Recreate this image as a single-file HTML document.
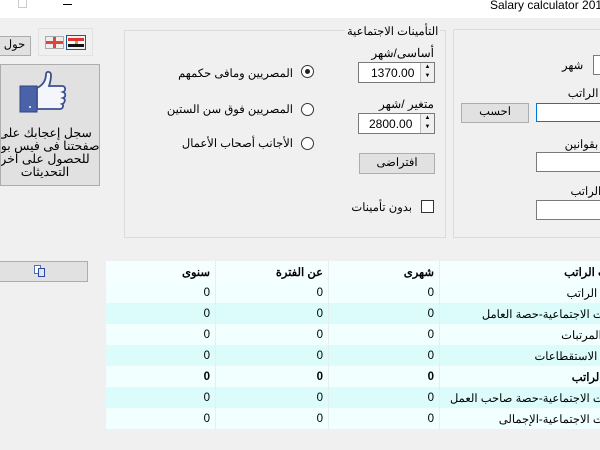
<!DOCTYPE html>
<html><head><meta charset="utf-8"><style>
*{margin:0;padding:0;box-sizing:border-box}
html,body{overflow:hidden}
body{width:600px;height:450px;overflow:hidden;background:#f0f0f0;font-family:"Liberation Sans","Noto Sans CJK SC",sans-serif;font-size:11px;color:#000;position:relative}
.a{position:absolute}
.t{position:absolute;white-space:nowrap;direction:rtl;font-size:11.5px}
.btn{position:absolute;background:#e1e1e1;border:1px solid #adadad;text-align:center;font-size:11.5px;line-height:17px}
.in{position:absolute;background:#fff;border:1px solid #7a7a7a}
.rad{position:absolute;width:13px;height:13px;border:1px solid #333;border-radius:50%;background:#fff}
.tw{position:absolute;left:106px;top:261px;width:494px;height:170px;overflow:hidden}
table{position:absolute;right:-40px;top:0;border-collapse:collapse;direction:rtl;width:534px;table-layout:fixed}
td{height:21px;padding:0 5px;border-right:1px solid #e6eef0;border-left:1px solid #e6eef0;font-size:11.5px;text-align:right;white-space:nowrap;overflow:hidden}
tr:nth-child(odd) td{background:#dcfcfc}
tr:nth-child(even) td{background:#f1ffff}
tr.h td{background:#f5ffff;font-weight:bold}
tr.b td{font-weight:bold}
.clip{position:absolute;overflow:hidden}
</style></head><body>
<div class="a" style="left:0;top:0;width:600px;height:18px;background:#fff"></div>
<div class="a" style="left:18px;top:0;width:9px;height:8px;border:1px solid #ccc;border-top:none"></div>
<div class="a" style="left:63px;top:4px;width:9px;height:1px;background:#000"></div>
<div class="t" style="left:490px;top:-2px;direction:ltr;font-size:12px">Salary calculator 2018</div>

<!-- flags -->
<div class="a" style="left:38px;top:28px;width:55px;height:28px;border:1px solid #e2e2e2"></div>
<div class="a" style="left:45px;top:36px;width:19px;height:13px;background:#eee;border:1px solid #aaa">
<div class="a" style="left:7px;top:0;width:3px;height:11px;background:#d44"></div><div class="a" style="left:0;top:4px;width:17px;height:3px;background:#d44"></div></div>
<div class="a" style="left:66px;top:35px;width:20px;height:15px;border:1px solid #1c5a8a;padding:2px 1px">
<div style="height:3px;background:#d33"></div><div style="height:3px;background:#fff;position:relative"><div class="a" style="left:7px;top:0;width:3px;height:3px;background:#c93"></div></div><div style="height:3px;background:#111"></div></div>
<div class="btn" style="left:-2px;top:36px;width:33px;height:20px">حول</div>

<!-- fb -->
<div class="a" style="left:0;top:64px;width:100px;height:122px;background:#e1e1e1;border:1px solid #adadad;overflow:hidden">
<div class="a" style="left:-16px;top:62px;width:120px;text-align:center;direction:rtl;font-size:12.5px;line-height:13px">سجل إعجابك على صفحتنا فى فيس بوك للحصول على اخر التحديثات</div>
</div>
<svg class="a" style="left:18px;top:70px" width="52" height="44" viewBox="0 0 52 44">
<path d="M2 16h17v26H2z" fill="#4a63a8" stroke="#2e4485"/>
<circle cx="12" cy="37" r="1" fill="#fff"/>
<path d="M19 18c6-3 9-8 9-14 0-3 5-3 5 1 0 4-1 8-2 11h13c4 0 4 5 1 6 3 1 3 5 0 6 3 1 2 5-1 6 2 1 1 5-2 5H19z" fill="#f4f6fb" stroke="#3b5090" stroke-width="1.8"/>
</svg>

<!-- mid group -->
<div class="a" style="left:124px;top:30px;width:322px;height:208px;border:1px solid #dcdcdc"></div>
<div class="t" style="left:345px;top:24px;background:#f0f0f0;padding:0 2px">التأمينات الاجتماعية</div>
<div class="rad" style="left:301px;top:65px"><div class="a" style="left:3px;top:3px;width:5px;height:5px;border-radius:50%;background:#222"></div></div>
<div class="rad" style="left:301px;top:103px"></div>
<div class="rad" style="left:301px;top:137px"></div>
<div class="t" style="right:307px;top:66px">المصريين ومافى حكمهم</div>
<div class="t" style="right:307px;top:102px">المصريين فوق سن الستين</div>
<div class="t" style="right:307px;top:136px">الأجانب أصحاب الأعمال</div>
<div class="t" style="right:166px;top:46px;font-size:12px">أساسى/شهر</div>
<div class="in" style="left:358px;top:62px;width:77px;height:21px;font-size:12px;padding:3px 0 0 12px">1370.00<div class="a" style="right:0;top:0;width:14px;height:19px;border-left:1px solid #bbb;background:#f0f0f0;font-size:6px;line-height:9px;text-align:center">▲<br>▼</div></div>
<div class="t" style="right:166px;top:97px;font-size:12px">متغير /شهر</div>
<div class="in" style="left:358px;top:113px;width:77px;height:21px;font-size:12px;padding:3px 0 0 10px">2800.00<div class="a" style="right:0;top:0;width:14px;height:19px;border-left:1px solid #bbb;background:#f0f0f0;font-size:6px;line-height:9px;text-align:center">▲<br>▼</div></div>
<div class="btn" style="left:359px;top:153px;width:76px;height:21px;line-height:19px">افتراضى</div>
<div class="a" style="left:421px;top:200px;width:13px;height:13px;border:1px solid #333;background:#fff"></div>
<div class="t" style="right:188px;top:200px">بدون تأمينات</div>

<!-- right group -->
<div class="clip" style="left:440px;top:20px;width:160px;height:230px">
<div class="a" style="left:13px;top:9px;width:160px;height:209px;border:1px solid #dcdcdc"></div>
<div class="in" style="left:153px;top:35px;width:20px;height:20px"></div>
<div class="t" style="left:122px;top:38px">شهر</div>
<div class="t" style="right:-30px;top:66px">صافى الراتب</div>
<div class="in" style="left:96px;top:83px;width:80px;height:19px;border-color:#0078d7"></div>
<div class="btn" style="left:21px;top:83px;width:68px;height:20px">احسب</div>
<div class="t" style="right:-35px;top:117px">البدلات بقوانين</div>
<div class="in" style="left:96px;top:132px;width:80px;height:20px"></div>
<div class="t" style="right:-38px;top:164px">اجمالى الراتب</div>
<div class="in" style="left:96px;top:180px;width:80px;height:20px"></div>
</div>

<!-- copy btn -->
<div class="a" style="left:0;top:261px;width:88px;height:21px;background:#e1e1e1;border:1px solid #adadad;border-left:none"></div>
<div class="a" style="left:34px;top:265px;width:7px;height:9px;border:1px solid #5570b0;background:#fff"></div>
<div class="a" style="left:38px;top:268px;width:7px;height:9px;border:1px solid #2a4aa0;background:#dde6ff"></div>

<div class="tw">
<table>
<colgroup><col style="width:200px"><col style="width:111px"><col style="width:113px"><col style="width:110px"></colgroup>
<tr class="h"><td>مكونات الراتب</td><td>شهرى</td><td>عن الفترة</td><td>سنوى</td></tr>
<tr><td>اجمالى الراتب</td><td>0</td><td>0</td><td>0</td></tr>
<tr><td>التأمينات الاجتماعية-حصة العامل</td><td>0</td><td>0</td><td>0</td></tr>
<tr><td>ضريبة المرتبات</td><td>0</td><td>0</td><td>0</td></tr>
<tr><td>اجمالى الاستقطاعات</td><td>0</td><td>0</td><td>0</td></tr>
<tr class="b"><td>صافى الراتب</td><td>0</td><td>0</td><td>0</td></tr>
<tr><td>التأمينات الاجتماعية-حصة صاحب العمل</td><td>0</td><td>0</td><td>0</td></tr>
<tr><td>التأمينات الاجتماعية-الإجمالى</td><td>0</td><td>0</td><td>0</td></tr>
</table>
</div>
</body></html>
